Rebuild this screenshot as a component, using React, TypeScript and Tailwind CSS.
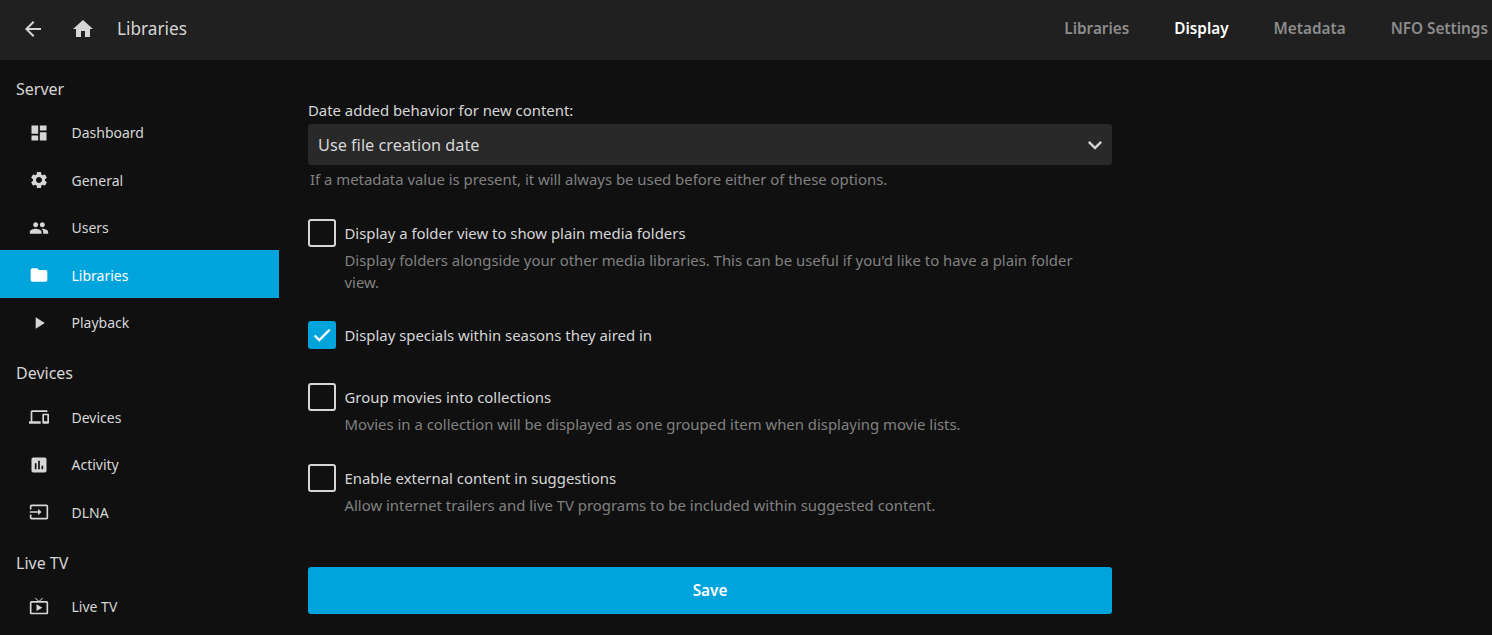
import type { ReactNode } from 'react'
import {
  MdArrowBack,
  MdDashboard,
  MdSettings,
  MdPeople,
  MdFolder,
  MdPlayArrow,
  MdDevices,
  MdAssessment,
  MdInput,
  MdLiveTv,
  MdHome,
  MdKeyboardArrowDown,
} from 'react-icons/md'

function NavItem({ icon, label, active }: { icon: ReactNode; label: string; active?: boolean }) {
  return (
    <div
      className={`flex h-[47.5px] items-center pl-[29px] pt-[2px] text-[14px] ${
        active ? 'bg-[#00a4dc] text-white' : 'text-[#d6d6d6]'
      }`}
    >
      <span className="flex w-[42.5px] text-[20px]">{icon}</span>
      {label}
    </div>
  )
}

function NavHeading({ children, className }: { children: ReactNode; className: string }) {
  return <div className={`pl-4 text-[16px] leading-[24px] text-[#d6d6d6] ${className}`}>{children}</div>
}

function Check({
  label,
  help,
  checked,
  className,
}: {
  label: string
  help?: string
  checked?: boolean
  className: string
}) {
  return (
    <div className={className}>
      <div className="flex items-center">
        <span
          className={`flex h-[28px] w-[28px] items-center justify-center rounded-[3px] ${
            checked ? 'bg-[#00a4dc]' : 'border-2 border-[#d6d6d6]'
          }`}
        >
          {checked && (
            <svg viewBox="0 0 24 24" className="h-[22px] w-[22px] fill-white stroke-white stroke-[0.6px]">
              <path d="M9 16.17 4.83 12l-1.42 1.41L9 19 21 7l-1.41-1.41z" />
            </svg>
          )}
        </span>
        <span className="ml-[8.5px] text-[14.9px] leading-[28px] text-[#d6d6d6]">{label}</span>
      </div>
      {help && (
        <p className="mt-[3px] pl-[36.5px] pr-[24px] text-[14.9px] leading-[21.6px] text-[#808080]">{help}</p>
      )}
    </div>
  )
}

export default function App() {
  return (
    <div className="h-[635px] w-[1492px] overflow-hidden bg-[#101010] font-['Noto_Sans',sans-serif]">
      {/* Header */}
      <header className="flex h-[60px] items-center bg-[#202020] pb-[3px]">
        <MdArrowBack className="ml-[21px] text-[24px] text-[#d6d6d6]" />
        <MdHome className="ml-[26px] text-[24px] text-[#d6d6d6]" />
        <span className="ml-[22px] text-[17.2px] text-[#d6d6d6]">Libraries</span>
        <nav className="ml-auto flex gap-[45px] pr-[4px] text-[15.3px] font-semibold text-[#8c8c8c]">
          <span>Libraries</span>
          <span className="text-white">Display</span>
          <span>Metadata</span>
          <span>NFO Settings</span>
        </nav>
      </header>

      <div className="flex">
        {/* Sidebar */}
        <aside className="w-[279px] shrink-0">
          <NavHeading className="pt-[17px] pb-[6.9px]">Server</NavHeading>
          <NavItem icon={<MdDashboard />} label="Dashboard" />
          <NavItem icon={<MdSettings />} label="General" />
          <NavItem icon={<MdPeople />} label="Users" />
          <NavItem icon={<MdFolder />} label="Libraries" active />
          <NavItem icon={<MdPlayArrow />} label="Playback" />
          <NavHeading className="pt-[15.6px] pb-[7.5px]">Devices</NavHeading>
          <NavItem icon={<MdDevices />} label="Devices" />
          <NavItem icon={<MdAssessment />} label="Activity" />
          <NavItem icon={<MdInput />} label="DLNA" />
          <NavHeading className="pt-[16px] pb-[6.5px]">Live TV</NavHeading>
          <NavItem icon={<MdLiveTv />} label="Live TV" />
        </aside>

        {/* Main content */}
        <main className="ml-[29px] w-[804px] pt-[39px]">
          <label className="block text-[14.9px] leading-[22px] text-[#d6d6d6]">
            Date added behavior for new content:
          </label>
          <div className="mt-[3px] flex h-[41px] items-center justify-between rounded-[3px] bg-[#292929] pl-[10px] pr-[3px] pt-[1px] text-[16.3px] text-[#d6d6d6]">
            Use file creation date
            <MdKeyboardArrowDown className="text-[28px]" />
          </div>
          <p className="mt-[3px] pl-[2px] text-[14.9px] leading-[22px] text-[#808080]">
            If a metadata value is present, it will always be used before either of these options.
          </p>

          <Check
            className="mt-[29px]"
            label="Display a folder view to show plain media folders"
            help="Display folders alongside your other media libraries. This can be useful if you'd like to have a plain folder view."
          />
          <Check className="mt-[27.8px]" label="Display specials within seasons they aired in" checked />
          <Check
            className="mt-[34px]"
            label="Group movies into collections"
            help="Movies in a collection will be displayed as one grouped item when displaying movie lists."
          />
          <Check
            className="mt-[28.4px]"
            label="Enable external content in suggestions"
            help="Allow internet trailers and live TV programs to be included within suggested content."
          />

          <button className="mt-[50.4px] h-[47px] w-full rounded-[3px] bg-[#00a4dc] text-[15.3px] font-semibold text-white">
            Save
          </button>
        </main>
      </div>
    </div>
  )
}
